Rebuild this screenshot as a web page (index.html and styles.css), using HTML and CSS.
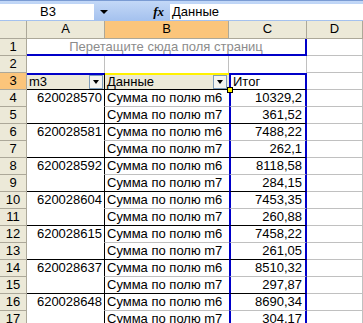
FILE: index.html
```html
<!DOCTYPE html>
<html lang="ru">
<head>
    <meta charset="UTF-8">
    <title>Сводная таблица</title>
    <link rel="stylesheet" href="styles.css">
</head>
<body>
    <div class="fbar">
        <div class="namebox">B3</div>
        <div class="namearrow"><span class="tri"></span></div>
        <div class="fx">fx</div>
        <div class="formula">Данные</div>
    </div>

    <div class="sheet">
        <!-- заголовки столбцов -->
        <div class="hd corner"></div>
        <div class="hd">A</div>
        <div class="hd sel">B</div>
        <div class="hd">C</div>
        <div class="hd">D</div>

        <div class="rh">1</div>
        <div class="cell pagezone">Перетащите сюда поля страниц</div>
        <div class="cell"></div>

        <div class="rh">2</div>
        <div class="cell row2"></div>
        <div class="cell row2"></div>
        <div class="cell row2"></div>
        <div class="cell"></div>

        <div class="rh sel">3</div>
        <div class="cell field fa">m3<span class="drop"><span class="tri"></span></span></div>
        <div class="cell field fb">Данные<span class="drop"><span class="tri"></span></span></div>
        <div class="cell total">Итог<span class="handle"></span></div>
        <div class="cell"></div>

        <!-- данные сводной -->
        <div class="rh">4</div>
        <div class="cell key">620028570</div>
        <div class="cell nm">Сумма по полю m6</div>
        <div class="cell val">10329,2</div>
        <div class="cell"></div>

        <div class="rh">5</div>
        <div class="cell key last"></div>
        <div class="cell nm last">Сумма по полю m7</div>
        <div class="cell val last">361,52</div>
        <div class="cell"></div>

        <div class="rh">6</div>
        <div class="cell key">620028581</div>
        <div class="cell nm">Сумма по полю m6</div>
        <div class="cell val">7488,22</div>
        <div class="cell"></div>

        <div class="rh">7</div>
        <div class="cell key last"></div>
        <div class="cell nm last">Сумма по полю m7</div>
        <div class="cell val last">262,1</div>
        <div class="cell"></div>

        <div class="rh">8</div>
        <div class="cell key">620028592</div>
        <div class="cell nm">Сумма по полю m6</div>
        <div class="cell val">8118,58</div>
        <div class="cell"></div>

        <div class="rh">9</div>
        <div class="cell key last"></div>
        <div class="cell nm last">Сумма по полю m7</div>
        <div class="cell val last">284,15</div>
        <div class="cell"></div>

        <div class="rh">10</div>
        <div class="cell key">620028604</div>
        <div class="cell nm">Сумма по полю m6</div>
        <div class="cell val">7453,35</div>
        <div class="cell"></div>

        <div class="rh">11</div>
        <div class="cell key last"></div>
        <div class="cell nm last">Сумма по полю m7</div>
        <div class="cell val last">260,88</div>
        <div class="cell"></div>

        <div class="rh">12</div>
        <div class="cell key">620028615</div>
        <div class="cell nm">Сумма по полю m6</div>
        <div class="cell val">7458,22</div>
        <div class="cell"></div>

        <div class="rh">13</div>
        <div class="cell key last"></div>
        <div class="cell nm last">Сумма по полю m7</div>
        <div class="cell val last">261,05</div>
        <div class="cell"></div>

        <div class="rh">14</div>
        <div class="cell key">620028637</div>
        <div class="cell nm">Сумма по полю m6</div>
        <div class="cell val">8510,32</div>
        <div class="cell"></div>

        <div class="rh">15</div>
        <div class="cell key last"></div>
        <div class="cell nm last">Сумма по полю m7</div>
        <div class="cell val last">297,87</div>
        <div class="cell"></div>

        <div class="rh">16</div>
        <div class="cell key">620028648</div>
        <div class="cell nm">Сумма по полю m6</div>
        <div class="cell val">8690,34</div>
        <div class="cell"></div>

        <div class="rh">17</div>
        <div class="cell key last"></div>
        <div class="cell nm last">Сумма по полю m7</div>
        <div class="cell val last">304,17</div>
        <div class="cell"></div>
    </div>
</body>
</html>
```

FILE: styles.css
```css
* {
    margin: 0;
    padding: 0;
    box-sizing: border-box;
}
body {
    width: 363px;
    height: 323px;
    overflow: hidden;
    background: white;
    font-family: "Liberation Sans", Arial, sans-serif;
    font-size: 13px;
    color: black;
}

/* строка формул */
.fbar {
    display: flex;
    height: 21px;
    padding: 3px 0 1px 0;
    background: linear-gradient(#c3d8f7, #a4c1ee);
    border-top: 1px solid #7a9bd3;
}
.namebox {
    width: 94px;
    background: white;
    text-align: center;
    line-height: 16px;
    padding-left: 2px;
}
.namearrow {
    width: 20px;
    display: flex;
    align-items: center;
    justify-content: center;
}
.tri {
    border-left: 4px solid transparent;
    border-right: 4px solid transparent;
    border-top: 4px solid black;
}
.fx {
    width: 56px;
    font-family: "Liberation Serif", serif;
    font-style: italic;
    font-weight: bold;
    line-height: 16px;
    text-align: right;
    padding-right: 6px;
}
.formula {
    flex: 1;
    background: white;
    line-height: 16px;
    padding-left: 2px;
}

/* лист */
.sheet {
    display: grid;
    grid-template-columns: 27px 78px 124px 78px 1fr;
    grid-template-rows: 18px;
    grid-auto-rows: 17px;
}
.hd,
.rh {
    background: #ece9d8;
    border-right: 1px solid #aca899;
    border-bottom: 1px solid #aca899;
    text-align: center;
    line-height: 16px;
}
.hd.sel,
.rh.sel {
    background: #fbc57b;
}
.cell {
    border-right: 1px solid #c0c0c0;
    border-bottom: 1px solid #c0c0c0;
    line-height: 16px;
    white-space: nowrap;
    overflow: hidden;
}

.pagezone {
    grid-column: span 3;
    text-align: center;
    color: #8c8c8c;
    border-bottom: 2px solid #0000c8;
    border-right: 2px solid #0000c8;
    line-height: 15px;
}
.row2 {
    border-bottom: 0;
}

/* поля сводной */
.field {
    position: relative;
    background: #ece9d8;
    padding-left: 2px;
    line-height: 14px;
    border-bottom-color: black;
}
.fa {
    border-top: 2px solid #0000c8;
    border-right-color: black;
}
.fb {
    border-top: 2px solid #fff200;
    border-right: 0;
}
.drop {
    position: absolute;
    right: 1px;
    top: 0;
    width: 14px;
    height: 14px;
    background: #f4f4f0;
    border: 1px solid #7f9db9;
    display: flex;
    align-items: center;
    justify-content: center;
}
.drop .tri {
    border-left-width: 3px;
    border-right-width: 3px;
}
.fb .drop {
    right: 2px;
}
.total {
    position: relative;
    overflow: visible;
    padding-left: 2px;
    line-height: 14px;
    border: 2px solid #0000c8;
    border-bottom: 1px solid black;
}
.handle {
    position: absolute;
    left: -4px;
    bottom: -4px;
    width: 6px;
    height: 6px;
    background: #fff200;
    border: 1px solid black;
}

.key {
    text-align: right;
    padding-right: 2px;
    border-right-color: black;
    border-bottom-color: white;
}
.nm {
    padding-left: 2px;
    border-right: 0;
}
.val {
    text-align: right;
    padding-right: 3px;
    border-left: 2px solid #0000c8;
    border-right: 2px solid #0000c8;
}
.cell.last {
    border-bottom-color: black;
}
```
